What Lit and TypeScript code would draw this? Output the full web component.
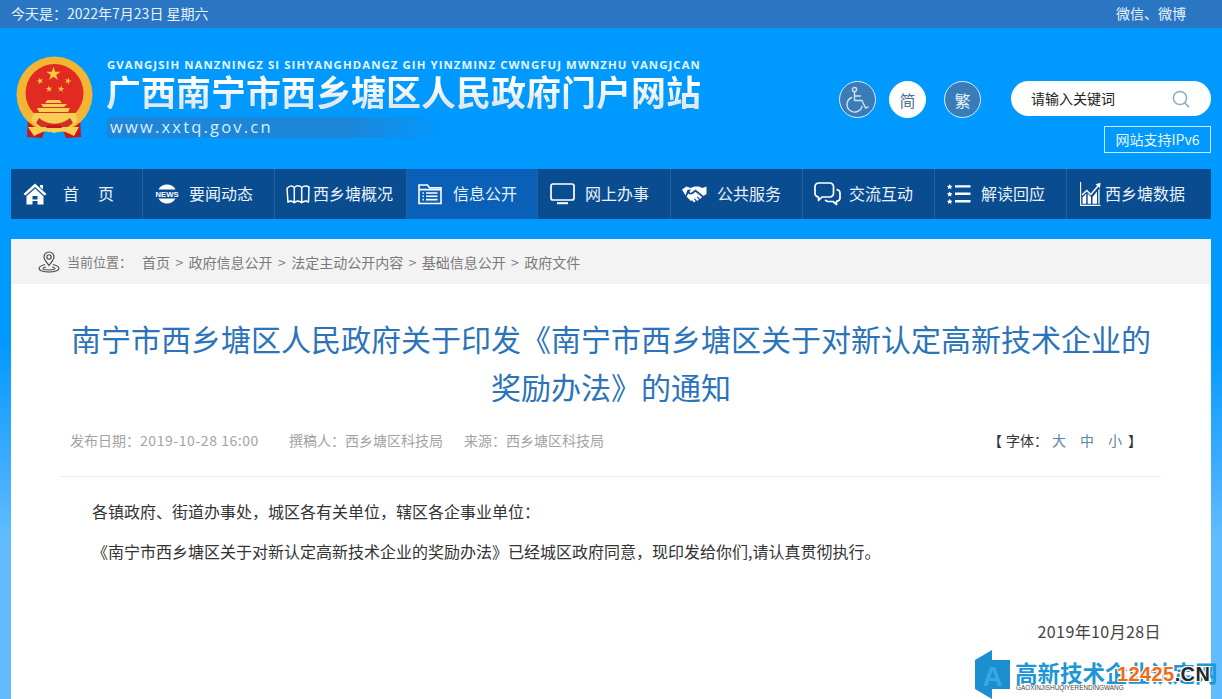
import { LitElement, html, css, svg } from "lit";
import { customElement } from "lit/decorators.js";

const icons: Record<string, unknown> = {
  home: svg`<svg width="24" height="22" viewBox="0 0 24 22"><path fill="#fff" d="M12 .5 L23.5 11 L21.6 12.6 L12 4 L2.4 12.6 L.5 11 Z M17 2 H20 V6.5 L17 4 Z"/><path fill="#fff" fill-rule="evenodd" d="M12 5.6 L20.5 13.2 V21.5 H3.5 V13.2 Z M9.5 13 V16.4 H14.5 V13 Z M9.5 18 V21.5 H14.5 V18 Z"/></svg>`,
  news: svg`<svg width="24" height="20" viewBox="0 0 24 20"><path fill="#fff" d="M3.4 5.4 A10 10 0 0 1 20.6 5.4 Z M3.4 14.6 H20.6 A10 10 0 0 1 3.4 14.6 Z"/><text x="12" y="13.2" text-anchor="middle" font-family="Liberation Sans" font-weight="700" font-size="7.6" fill="#fff" textLength="23" lengthAdjust="spacingAndGlyphs">NEWS</text></svg>`,
  map: svg`<svg width="24" height="20" viewBox="0 0 24 20" fill="none" stroke="#fff" stroke-width="1.5" stroke-linejoin="round"><path d="M1 4.5 C3.5 1.5 6 1.5 8.3 3.5 C10.5 1.5 13.5 1.5 15.7 3.5 C18 1.5 20.5 1.5 23 3 L22.5 18 C20 16.5 18 16.8 15.7 18.8 C13.5 16.8 10.5 16.8 8.3 18.8 C6 16.8 4 16.5 2 18.2 Z M8.3 3.5 V18.8 M15.7 3.5 V18.8"/></svg>`,
  folder: svg`<svg width="24" height="22" viewBox="0 0 24 22" fill="none" stroke="#fff" stroke-width="1.6"><path d="M1 20.5 V2 H9.5 L11.5 4.8 H23 V20.5 Z M1 6.6 H23"/><path d="M4.5 10 H6 M8 10 H19.5 M4.5 13.3 H6 M8 13.3 H19.5 M4.5 16.6 H6 M8 16.6 H19.5"/></svg>`,
  screen: svg`<svg width="25" height="22" viewBox="0 0 25 22"><rect x="1" y="1" width="23" height="16" rx="2" fill="none" stroke="#fff" stroke-width="1.7"/><path fill="#fff" d="M7 19.2 H18 V21.2 H7 Z"/></svg>`,
  hands: svg`<svg width="25" height="18" viewBox="0 0 25 18"><path fill="#fff" d="M0 4.5 L4.5 1.5 L8.5 3 L12.5 1.5 L16.5 1.5 L20.5 3 L24.5 1.5 V9 L21.5 11 L13.5 4.6 L9.5 7.5 C8.4 8.2 7 7.4 7.8 6 L9 4.6 L5.6 4.8 L3.5 10.5 Z"/><path fill="#fff" d="M4.5 11.5 L6.4 8.5 C8 10 10.5 9.8 13.3 6.8 L20 12 L18.2 14 L15.4 11.4 L14.7 12 L17 14.6 L15.2 16 L12.7 13.3 L12 13.9 L13.6 16 L12 17.4 L10 15.2 L8.8 15.9 Z"/></svg>`,
  chat: svg`<svg width="27" height="24" viewBox="0 0 27 24" fill="none" stroke="#fff" stroke-width="1.7" stroke-linejoin="round"><path d="M4.5 1 H16 A3.5 3.5 0 0 1 19.5 4.5 V11.5 A3.5 3.5 0 0 1 16 15 H8 L4.5 18.5 V15 A3.5 3.5 0 0 1 1 11.5 V4.5 A3.5 3.5 0 0 1 4.5 1 Z"/><path d="M22.5 7.5 C25 8 26 9.5 26 11 V16 C26 17.8 25 19 22.5 19.3 V22.5 L19 19.5 H13.5 L11 18"/></svg>`,
  list: svg`<svg width="24" height="20" viewBox="0 0 24 20"><path fill="#fff" d="M2.7 0 L3.6 1.7 L5.4 2.1 L4.1 3.4 L4.4 5.2 L2.7 4.3 L1 5.2 L1.3 3.4 L0 2.1 L1.8 1.7 Z M2.7 7.4 L3.6 9.1 L5.4 9.5 L4.1 10.8 L4.4 12.6 L2.7 11.7 L1 12.6 L1.3 10.8 L0 9.5 L1.8 9.1 Z M2.7 14.8 L3.6 16.5 L5.4 16.9 L4.1 18.2 L4.4 20 L2.7 19.1 L1 20 L1.3 18.2 L0 16.9 L1.8 16.5 Z M8 1.2 H23.5 V3.6 H8 Z M8 8.6 H23.5 V11 H8 Z M8 16 H23.5 V18.4 H8 Z"/></svg>`,
  chart: svg`<svg width="21" height="24" viewBox="0 0 21 24"><path fill="none" stroke="#fff" stroke-width="1.1" d="M.6 0 V23.4 H20.5"/><path fill="#fff" d="M2.5 21.8 V15.5 L6.2 11.5 V21.8 Z M7.7 21.8 V11.5 L11 15 V21.8 Z M12.5 21.8 V15 L17 9.5 V21.8 Z M18.3 21.8 V8 L19.6 6.5 V21.8 Z"/><path fill="none" stroke="#fff" stroke-width="1.4" d="M2 13 L6.7 8.4 L10.8 12.4 L18 4"/><path fill="#fff" d="M15.5 2.2 L20.5 .8 L20 6 Z"/></svg>`,
};

function star(cx: number, cy: number, r: number, rot = 0): string {
  const pts: string[] = [];
  for (let i = 0; i < 10; i++) {
    const rad = i % 2 ? r * 0.382 : r;
    const a = -Math.PI / 2 + (i * Math.PI) / 5 + rot;
    pts.push(`${(cx + rad * Math.cos(a)).toFixed(2)},${(cy + rad * Math.sin(a)).toFixed(2)}`);
  }
  return pts.join(" ");
}

const navItems = [
  { icon: "home", label: "首页", gap: 16, left: 12, wide: true },
  { icon: "news", label: "要闻动态", gap: 10, left: 12 },
  { icon: "map", label: "西乡塘概况", gap: 3, left: 11 },
  { icon: "folder", label: "信息公开", gap: 11, left: 11, active: true },
  { icon: "screen", label: "网上办事", gap: 10, left: 12 },
  { icon: "hands", label: "公共服务", gap: 10, left: 11 },
  { icon: "chat", label: "交流互动", gap: 8, left: 11 },
  { icon: "list", label: "解读回应", gap: 10, left: 12 },
  { icon: "chart", label: "西乡塘数据", gap: 4, left: 13 },
];

@customElement("app-root")
export class AppRoot extends LitElement {
  static styles = css`
    :host {
      display: block;
      height: 699px;
      overflow: hidden;
      position: relative;
      font-family: "Noto Sans CJK SC", "Liberation Sans", sans-serif;
      background: linear-gradient(#0099ff 0, #0099ff 340px, #3fadff 470px, #62bdff 540px, #62bdff 699px);
    }
    .top {
      height: 28px;
      background: #2a76c3;
      color: #e8f2fa;
      font-size: 14px;
      line-height: 27px;
      display: flex;
      justify-content: space-between;
      padding: 0 36px 0 11px;
    }
    .head {
      height: 141px;
      display: flex;
      padding: 0 11px;
      background: #0099ff;
    }
    .emblem { margin: 28px 0 0 4px; width: 80px; height: 84px; flex: none; }
    .brand { margin: 30px 0 0 12px; width: 700px; flex: none; color: #fff; }
    .pinyin {
      font: 700 11.4px/14px "Open Sans", "Liberation Sans", sans-serif;
      letter-spacing: 1.07px;
      color: #e6f5ff;
      white-space: nowrap;
    }
    .cn {
      font-size: 35px;
      font-weight: 700;
      line-height: 37px;
      white-space: nowrap;
      width: max-content;
      margin-left: -1px;
      background: linear-gradient(#ffffff 30%, #dfe8ee 85%);
      -webkit-background-clip: text;
      background-clip: text;
      color: transparent;
    }
    .url {
      margin-top: 8px;
      width: 335px;
      height: 21px;
      padding-left: 3px;
      font: 400 16.5px/20px "Open Sans", "Liberation Sans", sans-serif;
      letter-spacing: 2.2px;
      color: #d8efff;
      background: linear-gradient(90deg, #1e86d8 0, #1e86d8 70%, #0099ff 100%);
    }
    .tools {
      margin-left: 32px;
      width: 372px;
      flex: none;
      display: flex;
      flex-direction: column;
      align-items: flex-end;
    }
    .row {
      margin-top: 53px;
      width: 100%;
      display: flex;
      align-items: flex-start;
    }
    .circle {
      width: 37px;
      height: 37px;
      box-sizing: border-box;
      border-radius: 50%;
      background: #3a7cb8;
      border: 1px solid #d9ecfa;
      color: #e9f3fa;
      font-size: 16px;
      display: flex;
      align-items: center;
      justify-content: center;
      flex: none;
    }
    .circle.light { background: #fff; color: #4f6e98; border-color: #fff; margin: 0 18px 0 13px; }
    .search {
      margin-left: 30px;
      width: 200px;
      height: 35px;
      border-radius: 18px;
      background: #fff;
      display: flex;
      align-items: center;
      justify-content: space-between;
      padding: 0 21px 0 20px;
      box-sizing: border-box;
      font-size: 14px;
      color: #222;
      flex: none;
    }
    .search span { padding-bottom: 2px; }
    .ipv6 {
      margin-top: 8px;
      width: 107px;
      height: 27px;
      box-sizing: border-box;
      border: 1px solid #cbe9fb;
      color: #e6f5ff;
      font-size: 14px;
      line-height: 25px;
      text-align: center;
      white-space: nowrap;
    }
    nav {
      margin: 0 11px;
      height: 50px;
      display: grid;
      grid-template-columns: 132px 132px 132px 131px 133px 132px 132px 132px 1fr;
      background: #0a4c90;
    }
    .item {
      display: flex;
      align-items: center;
      color: #e9f2f9;
      font-size: 16px;
      border-right: 1px solid #26609e;
      box-sizing: border-box;
      white-space: nowrap;
    }
    .item:last-child { border-right: 0; }
    .item.active { background: #0a5fb6; }
    .item svg { display: block; flex: none; }
    .item span { padding-bottom: 2px; }
    .item span.wide { letter-spacing: 19px; }
    .card {
      margin: 20px 11px 0;
      background: #fff;
      height: 460px;
    }
    .crumb {
      height: 45px;
      background: #f3f3f3;
      display: flex;
      align-items: center;
      padding-left: 27px;
      color: #7a7a7a;
      font-size: 14px;
      white-space: pre;
    }
    .crumb .pin { margin-right: 7px; flex: none; }
    .crumb .lead { font-size: 13px; margin-right: 10px; }
    .crumb .path span { margin: 0 5.4px; }
    h1 {
      margin: 30px 0 0;
      padding: 0 50px;
      text-align: center;
      font-size: 30px;
      font-weight: 400;
      line-height: 48px;
      color: #2b74b9;
    }
    .meta {
      margin: 18px 50px 0;
      padding: 0 19px 24px 9px;
      border-bottom: 1px solid #e8e8e8;
      display: flex;
      justify-content: space-between;
      font-size: 14px;
      line-height: 24px;
      color: #a3a3a3;
      white-space: nowrap;
    }
    .meta .left { display: flex; }
    .meta .num { letter-spacing: 0.56px; margin-right: 30px; }
    .meta .who { margin-right: 21px; }
    .font { display: flex; color: #333; }
    .font .lbl { margin: 0 4px 0 4px; }
    .font b { font-weight: 400; color: #5a86a8; margin-left: 14px; }
    .font b:first-of-type { margin-left: 0; }
    .font .close { margin-left: 6px; }
    .body { padding: 0 50px; color: #333; font-size: 16px; }
    .body p { margin: 0; line-height: 24px; }
    .p1 { padding: 22px 0 0 31px; }
    .p2 { padding: 16px 0 0 31px; }
    .body p.date { margin-top: 56px; text-align: right; color: #444; letter-spacing: 0.4px; }
    .mark { position: absolute; left: 975px; top: 650px; width: 247px; height: 49px; }
    .mark .t1 {
      position: absolute; left: 40px; top: 8px; font-size: 22.5px; line-height: 28px; font-weight: 700;
      color: #1d96d6; white-space: nowrap;
    }
    .mark .t2 {
      position: absolute; left: 41px; top: 34px; font: 400 6.4px/8px "Liberation Sans", sans-serif; color: #444; white-space: nowrap;
    }
    .mark .t3 {
      position: absolute; left: 142px; top: 12px; font: 700 20px/24px "Liberation Sans", sans-serif; color: #f26a12;
      letter-spacing: .4px; white-space: nowrap;
      text-shadow: 1px 0 #fff, -1px 0 #fff, 0 1px #fff, 0 -1px #fff, 1px 1px #fff, -1px -1px #fff, 1px -1px #fff, -1px 1px #fff;
    }
    .mark .t3 i { font-style: normal; color: #262626; }
  `;

  render() {
    return html`
      <div class="top"><span>今天是：2022年7月23日 星期六</span><span>微信、微博</span></div>
      <div class="head">
        <svg class="emblem" viewBox="0 0 80 84">
          <path fill="#c8161d" d="M13 60 L30 74 L27 82 L12 81 Z M65 60 L48 74 L51 82 L66 81 Z"/>
          <circle cx="39.5" cy="38.5" r="38" fill="#f2b632"/>
          <circle cx="39.5" cy="37" r="29" fill="#e12a22"/>
          <polygon fill="#f7c93c" points="${star(38.5, 18, 7.5)}"/>
          <polygon fill="#f7c93c" points="${star(25, 25, 3.6, -0.3)}"/>
          <polygon fill="#f7c93c" points="${star(53, 25, 3.6, 0.3)}"/>
          <polygon fill="#f7c93c" points="${star(34, 33, 3.6, -0.15)}"/>
          <polygon fill="#f7c93c" points="${star(46, 33, 3.6, 0.15)}"/>
          <path fill="#f8cf55" d="M30 47 H47 L44.5 44 H32.5 Z M28 51 H49 L52 48 H26 Z M24 56 H53 L55 52 H22 Z M16 64 A29 29 0 0 0 63 64 L60 57 H19 Z"/>
          <path fill="#c8161d" d="M21 67 A26 26 0 0 0 58 67 L55 62 A24 24 0 0 1 24 62 Z" opacity=".85"/>
          <path fill="#f8cf55" d="M13 71 H64 L59 80 C50 75 45 74 39 77 C33 74 28 75 19 80 Z"/>
          <path fill="#c8161d" d="M31 72 H47 L45 69 H33 Z"/>
        </svg>
        <div class="brand">
          <div class="pinyin">GVANGJSIH NANZNINGZ SI SIHYANGHDANGZ GIH YINZMINZ CWNGFUJ MWNZHU VANGJCAN</div>
          <div class="cn">广西南宁市西乡塘区人民政府门户网站</div>
          <div class="url">www.xxtq.gov.cn</div>
        </div>
        <div class="tools">
          <div class="row">
            <div class="circle">
              <svg width="26" height="28" viewBox="0 0 26 28" fill="none" stroke="#cfe2f2" stroke-width="1.4" stroke-linecap="round" stroke-linejoin="round"><circle cx="9.5" cy="3.6" r="2.1"/><path d="M9.5 6 V14.5 H17 L20.5 22 L23 21 M9.7 10 H15.5"/><path d="M6.6 11.5 A7.6 7.6 0 1 0 17 20.5"/></svg>
            </div>
            <div class="circle light">简</div>
            <div class="circle">繁</div>
            <div class="search"><span>请输入关键词</span>
              <svg width="18" height="18" viewBox="0 0 18 18" fill="none" stroke="#8eabc0" stroke-width="1.5" stroke-linecap="round"><circle cx="8" cy="8" r="6.6"/><path d="M12.8 12.8 L16.6 16.6"/></svg>
            </div>
          </div>
          <div class="ipv6">网站支持IPv6</div>
        </div>
      </div>
      <nav>
        ${navItems.map(
          (n) => html`<div class="item ${n.active ? "active" : ""}" style="padding-left:${n.left}px;gap:${n.gap}px">
            ${icons[n.icon]}<span class="${n.wide ? "wide" : ""}">${n.label}</span>
          </div>`
        )}
      </nav>
      <div class="card">
        <div class="crumb">
          <svg class="pin" width="22" height="22" viewBox="0 0 22 22" fill="none" stroke="#444" stroke-width="1.1"><path d="M11 14.5 C8 10.5 6 8.5 6 6 A5 5 0 0 1 16 6 C16 8.5 14 10.5 11 14.5 Z"/><circle cx="11" cy="6" r="2.2"/><path d="M7 13.5 C3 14.5 1 15.8 1 17.5 C1 19.5 5.5 21 11 21 C16.5 21 21 19.5 21 17.5 C21 15.8 19 14.5 15 13.5"/><path d="M8 16 C6 16.4 5 17 5 17.6 C5 18.6 8 19 11 19 C14 19 17 18.6 17 17.6 C17 17 16 16.4 14 16"/></svg>
          <span class="lead">当前位置：</span><span class="path">首页<span>&gt;</span>政府信息公开<span>&gt;</span>法定主动公开内容<span>&gt;</span>基础信息公开<span>&gt;</span>政府文件</span>
        </div>
        <h1>南宁市西乡塘区人民政府关于印发《南宁市西乡塘区关于对新认定高新技术企业的<br />奖励办法》的通知</h1>
        <div class="meta">
          <div class="left">
            <span>发布日期：</span><span class="num">2019-10-28 16:00</span>
            <span class="who">撰稿人：西乡塘区科技局</span><span>来源：西乡塘区科技局</span>
          </div>
          <div class="font">
            <span>【</span><span class="lbl">字体：</span><b>大</b><b>中</b><b>小</b><span class="close">】</span>
          </div>
        </div>
        <div class="body">
          <p class="p1">各镇政府、街道办事处，城区各有关单位，辖区各企事业单位：</p>
          <p class="p2">《南宁市西乡塘区关于对新认定高新技术企业的奖励办法》已经城区政府同意，现印发给你们,请认真贯彻执行。</p>
          <p class="date">2019年10月28日</p>
        </div>
      </div>
      <div class="mark">
        <svg width="36" height="49" viewBox="0 0 36 49" style="position:absolute;left:0;top:0"><path fill="#1b8fd0" d="M0 10 L17 0 V10 H35 V39 H17 V49 L0 39 Z"/><text x="17.5" y="36" text-anchor="middle" font-family="Liberation Sans" font-weight="700" font-size="28" fill="#3aa7e0">A</text></svg>
        <span class="t1">高新技术企业认定网</span>
        <span class="t2">GAOXINJISHUQIYERENDINGWANG</span>
        <span class="t3">12425<i>.CN</i></span>
      </div>
    `;
  }
}
